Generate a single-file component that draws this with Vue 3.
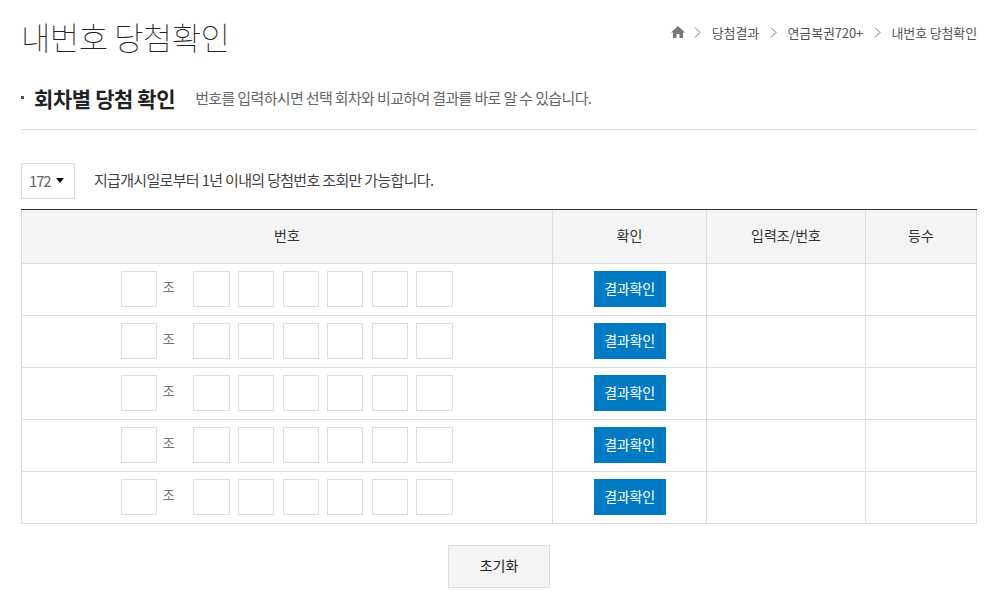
<template>
  <div class="page">
    <!-- Title + breadcrumb -->
    <header class="top">
      <h2 class="title">내번호 당첨확인</h2>
      <nav class="crumbs">
        <svg class="home" viewBox="0 0 14 12" width="14" height="12">
          <path d="M7 0 L14 6.4 H12 V12 H8.5 V8 H5.5 V12 H2 V6.4 H0 Z" fill="#777" />
        </svg>
        <template v-for="c in crumbs" :key="c">
          <svg class="sep" viewBox="0 0 7 11" width="7" height="11">
            <path d="M1 .5 L6 5.5 L1 10.5" fill="none" stroke="#777" stroke-width="1" />
          </svg>
          <span>{{ c }}</span>
        </template>
      </nav>
    </header>

    <!-- Section heading -->
    <div class="section">
      <i class="dot"></i>
      <h3>회차별 당첨 확인</h3>
      <p>번호를 입력하시면 선택 회차와 비교하여 결과를 바로 알 수 있습니다.</p>
    </div>

    <div class="round">
      <div class="select">172<i class="caret"></i></div>
      <p>지급개시일로부터 1년 이내의 당첨번호 조회만 가능합니다.</p>
    </div>

    <div class="grid-wrap">
      <table class="grid">
        <colgroup>
          <col style="width: 531px" />
          <col style="width: 154px" />
          <col style="width: 159px" />
          <col style="width: 111px" />
        </colgroup>
        <thead>
          <tr>
            <th>번호</th>
            <th>확인</th>
            <th>입력조/번호</th>
            <th>등수</th>
          </tr>
        </thead>
        <tbody>
          <tr v-for="r in 5" :key="r">
            <td>
              <div class="nums">
                <input class="box" type="text" />
                <span class="jo">조</span>
                <input class="box" type="text" />
                <input v-for="n in 5" :key="n" class="box" type="text" />
              </div>
            </td>
            <td><button class="check">결과확인</button></td>
            <td></td>
            <td></td>
          </tr>
        </tbody>
      </table>
    </div>

    <div class="foot">
      <button class="reset">초기화</button>
    </div>
  </div>
</template>

<script setup>
const crumbs = ["당첨결과", "연금복권720+", "내번호 당첨확인"];
</script>

<style>
html, body {
  margin: 0;
  background: #fff;
}
</style>

<style scoped>
.page {
  width: 956px;
  height: 605px;
  margin-left: 21px;
  overflow: hidden;
  font-family: "Noto Sans CJK KR", "Noto Sans", sans-serif;
  color: #333;
}

.top {
  display: flex;
  justify-content: space-between;
  align-items: flex-start;
  height: 82px;
}

.title {
  margin: 14px 0 0;
  font-size: 32px;
  line-height: 44px;
  font-weight: 100;
  letter-spacing: -0.6px;
  color: #222;
}

.crumbs {
  display: flex;
  align-items: center;
  height: 20px;
  margin-top: 22px;
  font-size: 13px;
  letter-spacing: -0.15px;
  color: #555;
}

.home {
  margin-right: 9px;
}

.sep {
  margin-right: 11px;
}

.crumbs span {
  margin-right: 10.5px;
}

.crumbs span:last-child {
  margin-right: 0;
}

.section {
  box-sizing: border-box;
  display: flex;
  align-items: center;
  height: 48px;
  border-bottom: 1px solid #ddd;
  padding-bottom: 16px;
}

.dot {
  width: 3px;
  height: 3px;
  background: #555;
  margin-right: 10px;
}

.section h3 {
  margin: 0 20px 0 0;
  font-size: 21px;
  font-weight: 700;
  letter-spacing: -0.4px;
  color: #222;
}

.section p {
  margin: 0;
  font-size: 15px;
  letter-spacing: -0.65px;
  color: #666;
}

.round {
  display: flex;
  align-items: center;
  margin-top: 33px;
}

.select {
  box-sizing: border-box;
  width: 54px;
  height: 36px;
  border: 1px solid #ddd;
  padding: 0 0 2px 7px;
  display: flex;
  align-items: center;
  font-size: 15px;
  letter-spacing: -1.2px;
  color: #666;
}

.caret {
  margin-left: 6px;
  border-left: 4px solid transparent;
  border-right: 4px solid transparent;
  border-top: 5px solid #111;
}

.round p {
  margin: 0 0 4px 19px;
  font-size: 15px;
  letter-spacing: -0.68px;
  color: #444;
}

.grid-wrap {
  width: 956px;
  margin-top: 10px;
  border-top: 1px solid #333;
}

.grid {
  width: 956px;
  border-collapse: collapse;
  table-layout: fixed;
}

.grid th,
.grid td {
  border: 1px solid #ddd;
  padding: 0;
  text-align: center;
}

.grid thead tr th {
  border-top: 0;
  height: 49px;
  padding-bottom: 4px;
  background: #f4f4f4;
  font-size: 14px;
  font-weight: 400;
  color: #333;
}

.grid td {
  height: 50px;
  padding-bottom: 1px;
}

.nums {
  display: flex;
  justify-content: center;
  align-items: center;
  gap: 8.2px;
  padding-right: 0.8px;
}

.box {
  box-sizing: border-box;
  width: 36.4px;
  height: 36px;
  border: 1px solid #ddd;
  background: #fff;
  padding: 0;
  margin: 0;
}

.jo {
  width: 13px;
  margin: -5px 10px 0 -3px;
  font-size: 13px;
  color: #777;
}

.check {
  display: block;
  width: 72px;
  height: 36px;
  margin: 0 auto;
  border: 0;
  padding: 0 0 2px;
  background: #007bc3;
  color: #fff;
  font-family: inherit;
  font-size: 14px;
  letter-spacing: -0.2px;
}

.foot {
  display: flex;
  justify-content: center;
  margin-top: 21px;
}

.reset {
  box-sizing: border-box;
  width: 102px;
  height: 43px;
  border: 1px solid #ddd;
  background: #f4f4f4;
  padding: 0 0 4px;
  font-family: inherit;
  font-size: 14px;
  color: #222;
}
</style>
